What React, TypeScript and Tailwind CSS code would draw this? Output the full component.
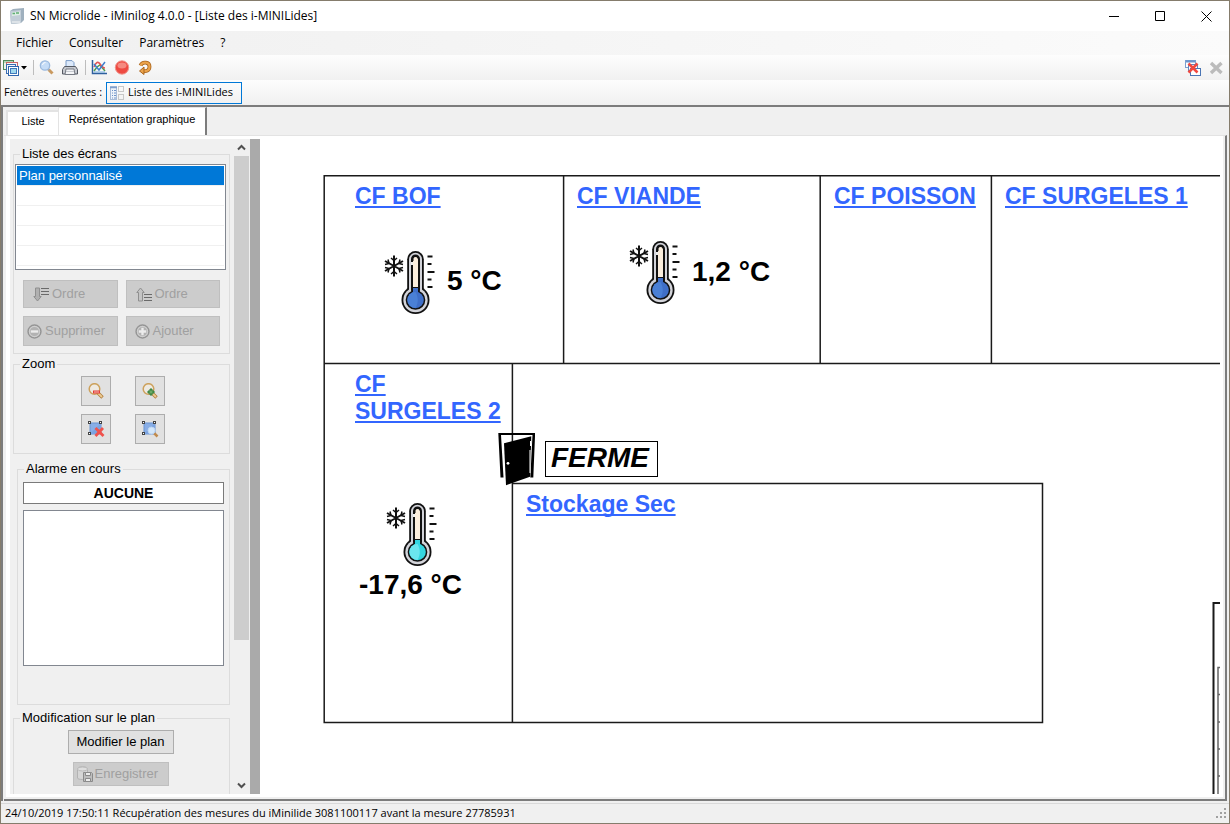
import type { ReactNode } from "react";

const floorLabels = [
  { text: "CF BOF", pos: "left-[95px] top-[44px]" },
  { text: "CF VIANDE", pos: "left-[317px] top-[44px]" },
  { text: "CF POISSON", pos: "left-[574px] top-[44px]" },
  { text: "CF SURGELES 1", pos: "left-[745px] top-[44px]" },
  { text: "CF SURGELES 2", pos: "left-[95px] top-[232px] w-[150px]" },
  { text: "Stockage Sec", pos: "left-[266px] top-[352px]" },
];

const readings = [
  { text: "5 °C", pos: "left-[187px] top-[126px]" },
  { text: "1,2 °C", pos: "left-[432px] top-[117px]" },
  { text: "-17,6 °C", pos: "left-[99px] top-[430px]" },
];

const probes = [
  { pos: "left-[124px] top-[111px]", fill: "#3f6fc8", light: "#4a80d6" },
  { pos: "left-[369px] top-[101px]", fill: "#3f6fc8", light: "#4a80d6" },
  { pos: "left-[126px] top-[363px]", fill: "#35d6e0", light: "#6be6ee" },
];

function AppIcon() {
  return (
    <svg width="16" height="16" viewBox="0 0 16 16">
      <path d="M1 3 4 1l11-1v12l-3 3-10 1z" fill="#9fb0be" />
      <path d="M1 3 12 2v13L2 16z" fill="#c3ced8" />
      <path d="M3 4.500l8-1v3.500l-8 1z" fill="#dfeee5" />
      <path d="M3.500 5.500h2.500M7 5h3" stroke="#5fae73" strokeWidth="1.500" />
      <path d="M3 14h8" stroke="#e6eaee" strokeWidth="1.500" />
    </svg>
  );
}

function WindowsIcon() {
  return (
    <svg width="16" height="16" viewBox="0 0 16 16">
      <rect x="0.500" y="0.500" width="10" height="9" fill="#eef6ea" stroke="#4f8a5b" />
      <path d="M1 2h9" stroke="#79b383" />
      <rect x="3.500" y="2.500" width="11" height="9" fill="#f4f7fc" stroke="#c96666" />
      <rect x="3.500" y="4.500" width="9" height="9" fill="#f4f7fc" stroke="#3a6cb0" />
      <rect x="5.500" y="6.500" width="10" height="9" fill="#fff" stroke="#2f66ae" />
      <rect x="7.500" y="8.500" width="6" height="5" fill="#9fd8ee" stroke="#3f78ba" />
    </svg>
  );
}

function SearchIcon() {
  return (
    <svg width="16" height="16" viewBox="0 0 16 16">
      <path d="M9.500 9.500 13.500 13.500" stroke="#c9995f" strokeWidth="3" />
      <path d="M8.500 8.500 10.500 10.500" stroke="#aaa" strokeWidth="1.500" />
      <circle cx="6" cy="5.500" r="4.700" fill="#c5dcf7" stroke="#9bb9de" strokeWidth="1.300" />
      <path d="M3.500 5a3 3 0 0 1 3-2.500" stroke="#fff" fill="none" />
    </svg>
  );
}

function PrinterIcon() {
  return (
    <svg width="16" height="16" viewBox="0 0 16 16">
      <path d="M4 8V.6h6l2 2V8z" fill="#dce9fa" stroke="#7b9bc6" />
      <path d="M2.500 6.500h11l2 3V14H.5V9.500z" fill="#c6c9cf" stroke="#555962" />
      <path d="M4 9h8l1 5.500H3z" fill="#f4f5f7" stroke="#777b84" />
      <path d="M4 11.500h8" stroke="#c6c9cf" />
    </svg>
  );
}

function ChartIcon() {
  return (
    <svg width="16" height="16" viewBox="0 0 16 16" fill="none">
      <path d="M1.500 0v13.500H16" stroke="#2e5f9e" strokeWidth="1.500" />
      <path d="M3 11 6 7l3-2 5 6" stroke="#4c9b52" strokeWidth="1.500" />
      <path d="M3 7c2-5 4-6 6-3s3 4 5 4" stroke="#e25353" strokeWidth="1.600" />
      <path d="M3 4 8 10l6-8" stroke="#3f80cf" strokeWidth="1.500" />
      <path d="M3 12h11" stroke="#74aee0" />
    </svg>
  );
}

function RecordIcon() {
  return (
    <svg width="16" height="16" viewBox="0 0 16 16">
      <circle cx="8" cy="7.500" r="6.700" fill="#ee4a42" stroke="#f0988f" />
      <ellipse cx="8" cy="5.500" rx="4.500" ry="3" fill="#f58a80" />
    </svg>
  );
}

function RefreshIcon() {
  return (
    <svg width="16" height="16" viewBox="0 0 16 16" fill="none">
      <path d="M3.500 5.500c2-4.500 9-3.500 9 1S9 11.500 6 11" stroke="#a9641d" strokeWidth="3.800" />
      <path d="M3.500 5.500c2-4.500 9-3.500 9 1S9 11.500 6 11" stroke="#eba34b" strokeWidth="2.200" />
      <path d="M7 7v7.500L2.500 11z" fill="#eba34b" stroke="#a9641d" />
    </svg>
  );
}

function CloseAllIcon() {
  return (
    <svg width="16" height="16" viewBox="0 0 16 16">
      <rect x="0.500" y="0.500" width="10" height="7" fill="#fff" stroke="#7b9fd0" />
      <path d="M1 1.500h9" stroke="#6d95cc" strokeWidth="2" />
      <rect x="3.500" y="4.500" width="9" height="7" fill="#fff" stroke="#5f88c0" />
      <rect x="5.500" y="8.500" width="10" height="7" fill="#fff" stroke="#4a75b4" />
      <path d="M3.500 3.500l9 9M12.500 3.500l-9 9" stroke="#f0483f" strokeWidth="2.600" />
    </svg>
  );
}

function FormIcon() {
  return (
    <svg width="14" height="14" viewBox="0 0 14 14" fill="none">
      <rect x="0.500" y="0.500" width="6" height="13" stroke="#a9bcd8" fill="#eef3fa" />
      <path d="M0 1.500h7" stroke="#7f9ecb" strokeWidth="1.500" />
      <path d="M2 4.500h1M4 4.500h2M2 7h1M4 7h2M2 9.500h1M4 9.500h2M2 12h1M4 12h2" stroke="#6f93c8" />
      <rect x="8.500" y="0.500" width="5" height="5" stroke="#c8c8c8" />
      <rect x="8.500" y="8.500" width="5" height="5" stroke="#c8c8c8" />
    </svg>
  );
}

function OrderIcon({ up }: { up?: boolean }) {
  return (
    <svg width="17" height="15" viewBox="0 0 17 15">
      {up ? (
        <path d="M2.500 14V5.500H.8L4.500 1l3.700 4.500H6.500V14z" fill="#c4c4c4" stroke="#8f8f8f" />
      ) : (
        <path d="M2.500 1v8.500H.8L4.500 14l3.700-4.500H6.500V1z" fill="#b0b0b0" stroke="#8f8f8f" />
      )}
      <path d={up ? "M8 7.500h8M8 10.500h8M8 13.500h8" : "M8 1.500h8M8 4.500h8M8 7.500h8"} stroke="#6a6a6a" />
    </svg>
  );
}

function RoundIcon({ plus }: { plus?: boolean }) {
  return (
    <svg width="15" height="15" viewBox="0 0 14 14" fill="none">
      <circle cx="7" cy="7" r="6" fill="#b2b2b2" stroke="#959595" strokeWidth="1.400" />
      <circle cx="7" cy="7" r="4.800" stroke="#cfcfcf" />
      <path d={plus ? "M3.500 7h7M7 3.500v7" : "M3.500 7h7"} stroke="#ececec" strokeWidth="2.200" />
    </svg>
  );
}

function MagnifierIcon({ plus }: { plus?: boolean }) {
  return (
    <svg width="16" height="16" viewBox="0 0 16 16" fill="none">
      <path d="M10 10l4.500 4.500" stroke="#b07c38" strokeWidth="3.400" />
      <path d="M10 10l4 4" stroke="#eccb94" strokeWidth="1.800" />
      <circle cx="6.500" cy="6" r="5.300" fill="#eeeae2" stroke="#cda15c" strokeWidth="1.500" />
      {plus ? (
        <path d="M8 6h2v2h2v2h-2v2H8v-2H6V8h2z" fill="#6cab67" stroke="#327c38" />
      ) : (
        <rect x="5.500" y="8" width="6" height="2" fill="#f9bdb8" stroke="#e13a35" />
      )}
    </svg>
  );
}

function AreaIcon({ remove }: { remove?: boolean }) {
  return (
    <svg width="17" height="17" viewBox="0 0 17 17" fill="none">
      <rect x="2" y="2" width="11" height="11" fill="#89aee6" stroke="#6b93d2" />
      <path d="M2 13 13 2v11z" fill="#7ba3e1" />
      <g fill="#fff" stroke="#444">
        <rect x="0.500" y="0.500" width="2" height="2" />
        <rect x="11.500" y="0.500" width="2" height="2" />
        <rect x="0.500" y="11.500" width="2" height="2" />
      </g>
      {remove ? (
        <path d="M7.500 7l8 8M15 7l-7.500 8" stroke="#f0524c" strokeWidth="2.800" />
      ) : (
        <>
          <path d="M12 12l3.500 3.500" stroke="#c08a4d" strokeWidth="2.500" />
          <circle cx="9.500" cy="9.500" r="3.500" fill="#d3e7fb" stroke="#bcd5f2" />
        </>
      )}
    </svg>
  );
}

function SaveIcon() {
  return (
    <svg width="16" height="16" viewBox="0 0 16 16" fill="none">
      <path d="M.500 3c0-3 10-3 10 0v9c0 2-10 2-10 0z" fill="#d6d6d6" stroke="#b3b3b3" />
      <ellipse cx="5.500" cy="3" rx="5" ry="2" stroke="#bbb" fill="#dedede" />
      <path d="M6.500 6.500h8l1 1v8h-9z" fill="#bdbdbd" stroke="#8a8a8a" />
      <path d="M8.500 6.500h5v3h-5zM8.500 12.500h5v3h-5z" fill="#ececec" stroke="#8a8a8a" />
    </svg>
  );
}

function Chevron({ down }: { down?: boolean }) {
  return (
    <svg width="9" height="7" viewBox="0 0 9 7" fill="none">
      <path d={down ? "M1 1.500 4.500 5 8 1.500" : "M1 5.500 4.500 2 8 5.500"} stroke="#505050" strokeWidth="2" />
    </svg>
  );
}

function Thermometer({ fill, light }: { fill: string; light: string }) {
  return (
    <svg width="52" height="66" viewBox="0 0 52 66" fill="none">
      <g fill="#111">
        <rect x="23.200" y="1" width="16.600" height="46" rx="8.300" />
        <circle cx="31.500" cy="50" r="14" />
      </g>
      <g fill="#d3d4da">
        <rect x="25" y="2.800" width="13" height="46" rx="6.500" />
        <circle cx="31.500" cy="50" r="12.200" />
      </g>
      <g fill="#111">
        <rect x="27" y="4.500" width="9" height="40" rx="4.500" />
        <circle cx="31.500" cy="50" r="9.800" />
      </g>
      <path d="M29 37V9.500a2.500 2.500 0 0 1 5 0V37z" fill="#fbeedd" />
      <path d="M29 11V8.500a2.500 2.500 0 0 1 5 0" stroke="#111" />
      <path d="M28 12v3" stroke="#eee" strokeWidth="2" />
      <rect x="29" y="38" width="5" height="6" fill={fill} />
      <circle cx="31.500" cy="50" r="8.300" fill={fill} />
      <path d="M31.500 42a8 8 0 0 0 0 16c3-5 3-11 0-16z" fill={light} />
      <path d="M43.500 6.500h5M43.500 14h4M43.500 22h7M43.500 29.500h4M43.500 37h5" stroke="#111" strokeWidth="1.800" />
      <g stroke="#111" strokeWidth="2">
        <path d="M10 5.500v21M1 11l18 10M19 11 1 21" />
        <path d="M7 8l3 2.500L13 8M7 24l3-2.500 3 2.500M1 14.500l4-1-1-4M19 17.500l-4 1 1 4M1 17.500l4 1-1 4M19 14.500l-4-1 1-4" strokeWidth="1.500" />
      </g>
    </svg>
  );
}

function Door() {
  return (
    <svg className="absolute left-[238px] top-[293px]" width="38" height="54" viewBox="0 0 38 54">
      <path d="M.300 1H37v3l-1.700 41.500h-3L34.500 3H3l2.500 42.500h-3z" fill="#000" />
      <path d="M6 11.300 33.300 4.300 32 44.700 8 53.300z" fill="#000" />
      <path d="M32.500 9v5M32 18v23" stroke="#fff" />
      <circle cx="10" cy="31.300" r="1.400" fill="#fff" />
    </svg>
  );
}

function Group({ title, className, children }: { title: string; className: string; children: ReactNode }) {
  return (
    <fieldset className={`border border-[#dcdcdc] ${className}`}>
      <legend className="ml-1.5 px-0.5 leading-4">{title}</legend>
      {children}
    </fieldset>
  );
}

const disabledBtn = "flex items-center border border-[#bfbfbf] bg-[#cccccc] text-[#a0a0a0]";
const squareBtn = "flex size-[30px] items-center justify-center border border-[#adadad] bg-[#e1e1e1]";

function Sidebar() {
  return (
    <aside className="flex w-[240px] shrink-0 bg-[#f0f0f0] text-[13px]">
      <div className="flex w-[223px] shrink-0 flex-col overflow-hidden px-[3px] pt-[7px]">
        <Group title="Liste des écrans" className="h-[208px] shrink-0">
          <div role="listbox" aria-label="Liste des écrans" className="mx-px mr-[3px] mt-0.5 h-[106px] overflow-hidden border border-[#828790] bg-white p-px">
            <div role="option" aria-selected="true" className="h-5 border-b border-[#f0f0f0] bg-[#0078d7] px-0.5 leading-5 text-white">
              Plan personnalisé
            </div>
            {[1, 2, 3, 4].map((n) => (
              <div key={n} className="h-5 border-b border-[#f0f0f0]" />
            ))}
          </div>
          <div className="mx-[9px] mt-2.5 grid grid-cols-2 gap-2">
            <button disabled className={`${disabledBtn} h-7 gap-0.5 pl-[9px]`}><OrderIcon />Ordre</button>
            <button disabled className={`${disabledBtn} h-7 gap-0.5 pl-[9px]`}><OrderIcon up />Ordre</button>
            <button disabled className={`${disabledBtn} h-[30px] gap-[3px] pl-[3px]`}><RoundIcon />Supprimer</button>
            <button disabled className={`${disabledBtn} h-[30px] gap-[3px] pl-2`}><RoundIcon plus />Ajouter</button>
          </div>
        </Group>

        <Group title="Zoom" className="mt-0.5 h-[98px] shrink-0">
          <div className="mt-1 grid w-fit grid-cols-2 gap-x-6 gap-y-2 pl-[67px]">
            <button aria-label="Zoom arrière" className={squareBtn}><MagnifierIcon /></button>
            <button aria-label="Zoom avant" className={squareBtn}><MagnifierIcon plus /></button>
            <button aria-label="Annuler la zone" className={squareBtn}><AreaIcon remove /></button>
            <button aria-label="Zoomer sur la zone" className={squareBtn}><AreaIcon /></button>
          </div>
        </Group>

        <Group title="Alarme en cours" className="ml-1 mt-[7px] h-[244px] shrink-0">
          <div className="flex flex-col gap-1.5 px-[5px] pt-[5px]">
            <input readOnly aria-label="Alarme en cours" value="AUCUNE" className="h-[22px] w-full border border-[#7a7a7a] bg-white text-center text-sm font-bold outline-none" />
            <textarea readOnly aria-label="Liste des alarmes" className="h-[156px] w-full resize-none border border-[#828790] bg-white outline-none" />
          </div>
        </Group>

        <Group title="Modification sur le plan" className="mt-[5px] h-[120px] shrink-0">
          <div className="flex flex-col items-center gap-2 pr-0.5 pt-1">
            <button className="h-6 w-[106px] border border-[#adadad] bg-[#e1e1e1]">Modifier le plan</button>
            <button disabled className={`${disabledBtn} h-6 w-24 gap-0.5 pl-[3px]`}><SaveIcon />Enregistrer</button>
          </div>
        </Group>
      </div>
      <div className="ml-px flex w-[15px] flex-col bg-[#f0f0f0]">
        <button aria-label="Défiler vers le haut" className="flex h-[17px] items-center justify-center"><Chevron /></button>
        <div className="min-h-0 flex-1">
          <div className="h-[78%] bg-[#cdcdcd]" />
        </div>
        <button aria-label="Défiler vers le bas" className="flex h-[17px] items-center justify-center"><Chevron down /></button>
      </div>
    </aside>
  );
}

function FloorPlan() {
  return (
    <main className="relative min-w-0 flex-1 overflow-hidden bg-white">
      <svg className="absolute left-0 top-0" width="960" height="655" viewBox="260 139 960 655" fill="none">
        <g stroke="#1a1a1a" strokeWidth="1.500">
          <path d="M1220 175.700H324.200V722.500H1042.500V483.500H512.400" />
          <path d="M324 363.500H1220M563.600 175.700V363.500M820.200 175.700V363.500M991.400 175.700V363.500M512.400 363.500V722.500" />
          <path d="M1220 603h-6.500V794" strokeWidth="2" />
        </g>
        <path d="M1220 667.500h-2V794M1218 694.500h2M1218 722h2M1218 749h2M1218 776h2" stroke="#666" strokeWidth="1.500" />
      </svg>
      {floorLabels.map((l) => (
        <a key={l.text} href="#" className={`absolute text-[23px] font-bold leading-[27px] text-[#3366ff] underline decoration-2 underline-offset-2 [text-decoration-skip-ink:none] ${l.pos}`}>
          {l.text}
        </a>
      ))}
      {probes.map((p) => (
        <div key={p.pos} className={`absolute ${p.pos}`}>
          <Thermometer fill={p.fill} light={p.light} />
        </div>
      ))}
      {readings.map((r) => (
        <div key={r.text} className={`absolute whitespace-nowrap text-[28px] font-bold leading-8 ${r.pos}`}>{r.text}</div>
      ))}
      <Door />
      <div className="absolute left-[285px] top-[302px] h-9 w-[113px] border border-black bg-white px-[5px] text-[28px] font-bold italic leading-8">
        FERME
      </div>
    </main>
  );
}

export default function App() {
  return (
    <div className="flex h-screen flex-col overflow-hidden border border-[#857c6c] bg-[#f0f0f0] font-['Liberation_Sans',Arial,sans-serif] text-black">
      <div className="flex flex-col font-['Open_Sans','Noto_Sans',sans-serif] text-xs">
        {/* Title bar */}
        <header className="flex h-[30px] items-center bg-white pl-2">
          <AppIcon />
          <h1 className="ml-[5px] flex-1">SN Microlide - iMinilog 4.0.0 - [Liste des i-MINILides]</h1>
          <div className="flex h-full [&>button]:flex [&>button]:w-[46px] [&>button]:items-center [&>button]:justify-center">
            <button aria-label="Réduire"><svg width="10" height="11"><path d="M0 5.500h10" stroke="#000" /></svg></button>
            <button aria-label="Agrandir"><svg width="11" height="11"><path d="M.500.500h9v9h-9z" fill="none" stroke="#000" /></svg></button>
            <button aria-label="Fermer"><svg width="11" height="11"><path d="M.500.500l10 10M10.500.500l-10 10" stroke="#000" /></svg></button>
          </div>
        </header>

        {/* Menu */}
        <nav className="flex h-6 items-center gap-4 bg-linear-to-r from-[#f0f0f0] to-[#fbfbfb] pl-[15px]">
          <button>Fichier</button>
          <button>Consulter</button>
          <button>Paramètres</button>
          <button>?</button>
        </nav>

        {/* Toolbar */}
        <div className="flex h-[25px] items-center bg-linear-to-b from-[#fdfdfd] to-[#f1f1f1] pl-0.5 pr-[5px]">
          <button aria-label="Fenêtres" className="flex items-center gap-px">
            <WindowsIcon />
            <svg width="7" height="4"><path d="M1 0h6L4 3.500z" fill="#000" /></svg>
          </button>
          <span className="ml-1.5 h-[15px] w-px bg-[#bdbdbd]" />
          <button aria-label="Rechercher" className="ml-[5px]"><SearchIcon /></button>
          <button aria-label="Imprimer" className="ml-[7px]"><PrinterIcon /></button>
          <span className="ml-[7px] h-[15px] w-px bg-[#bdbdbd]" />
          <button aria-label="Courbes" className="ml-[5px]"><ChartIcon /></button>
          <button aria-label="Enregistrement" className="ml-[7px]"><RecordIcon /></button>
          <button aria-label="Actualiser" className="ml-[7px]"><RefreshIcon /></button>
          <button aria-label="Fermer toutes les fenêtres" className="ml-auto"><CloseAllIcon /></button>
          <button aria-label="Fermer la fenêtre" className="ml-2">
            <svg width="15" height="14" viewBox="0 0 15 14"><path d="M2 2l10.500 10M12.500 2 2 12" stroke="#bbb" strokeWidth="3.400" /></svg>
          </button>
        </div>

        {/* Open windows */}
        <div className="flex h-[25px] items-center bg-linear-to-b from-[#fdfdfd] to-[#f0f0f0] pl-[3px]">
          <span className="w-[102px] whitespace-nowrap text-[11px]">Fenêtres ouvertes :</span>
          <button className="flex h-[22px] w-[136px] items-center gap-1 whitespace-nowrap border border-[#0078d7] px-[3px] text-[11px]">
            <FormIcon />
            Liste des i-MINILides
          </button>
        </div>
      </div>

      <div className="flex min-h-0 flex-1 flex-col border-l-2 border-t-2 border-[#7c7c7c] pl-px pr-0.5">
        <div role="tablist" className="flex h-7 shrink-0 items-end pl-0.5 text-[11px]">
          <button role="tab" aria-selected="false" className="h-[25px] w-[52px] border-l-2 border-t-2 border-[#e3e3e3] bg-white pb-1">Liste</button>
          <button role="tab" aria-selected="true" className="h-7 w-[149px] whitespace-nowrap border-r-2 border-t border-l border-l-[#e3e3e3] border-r-[#7c7c7c] border-t-[#e3e3e3] bg-white pb-1">
            Représentation graphique
          </button>
        </div>
        <div className="flex min-h-0 flex-1 border-b-2 border-r-2 border-t border-b-[#7c7c7c] border-r-[#7c7c7c] border-t-[#e3e3e3] pb-0.5 px-0.5">
          <div className="flex min-w-0 flex-1 bg-white py-[3px] pl-1 pr-[3px]">
            <Sidebar />
            <div className="w-2.5 shrink-0 bg-[#aaaaaa]" />
            <FloorPlan />
          </div>
        </div>
      </div>

      <footer className="mt-0.5 flex h-5 shrink-0 items-center border-t border-[#d9d9d9] pl-1 font-['Open_Sans','Noto_Sans',sans-serif] text-[11px]">
        <p className="flex-1 whitespace-nowrap">24/10/2019 17:50:11 Récupération des mesures du iMinilide 3081100117 avant la mesure 27785931</p>
        <svg width="14" height="12" fill="#a0a0a0">
          <path d="M9 0h2v2H9zM5 4h2v2H5zM9 4h2v2H9zM1 8h2v2H1zM5 8h2v2H5zM9 8h2v2H9z" />
        </svg>
      </footer>
    </div>
  );
}
